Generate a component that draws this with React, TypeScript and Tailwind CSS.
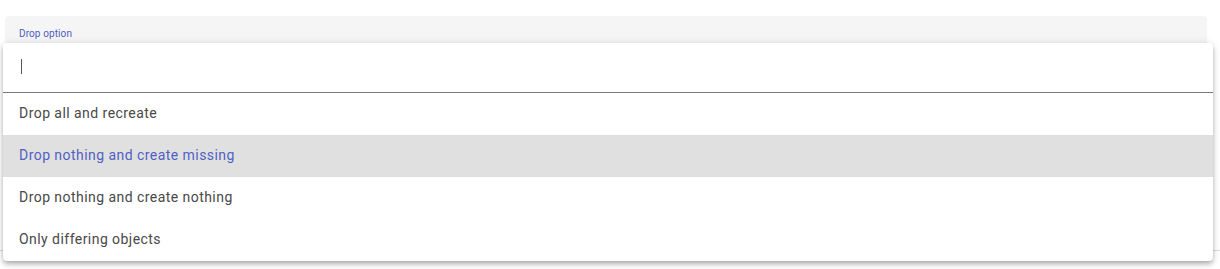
import React from "react";

const options = [
  "Drop all and recreate",
  "Drop nothing and create missing",
  "Drop nothing and create nothing",
  "Only differing objects",
];

export default function App() {
  return (
    <div
      className="relative w-[1220px] h-[269px] bg-white overflow-hidden"
      style={{ fontFamily: "Roboto, 'Liberation Sans', sans-serif" }}
    >
      <div className="pt-[17px] px-[5px] w-[1212px]">
        <div className="h-[226px] rounded-t-[4px] bg-[#f5f5f5] border-b border-[#d6d6d6] shadow-[0_-1px_1px_rgba(0,0,0,0.04)]">
          <div className="pl-[14px] pt-[10px] text-[10px] leading-[14px] tracking-[0.1px] text-[#4e5cc4]">
            Drop option
          </div>
        </div>
      </div>
      <div className="h-[8px] border-b border-[#dddddd]" />

      <div className="absolute left-[3px] top-[43px] w-[1210px] h-[218px] bg-white rounded-[4px] shadow-[0_2px_4px_-1px_rgba(0,0,0,0.2),0_4px_5px_0_rgba(0,0,0,0.14),0_1px_10px_0_rgba(0,0,0,0.12)] overflow-hidden">
        <div className="h-[50px] border-b border-[#7a7a7a] flex items-center pl-[18px]">
          <div className="w-px h-[15px] bg-[#555555] -mt-[2px]" />
        </div>
        {options.map((o, i) => (
          <div
            key={o}
            className={
              i === 1
                ? "h-[42px] flex items-center pl-[16px] pb-[1px] text-[14px] tracking-[0.45px] bg-[#e0e0e0] text-[#5060c4]"
                : "h-[42px] flex items-center pl-[16px] pb-[1px] text-[14px] tracking-[0.45px] text-[#484848]"
            }
          >
            {o}
          </div>
        ))}
      </div>
    </div>
  );
}
